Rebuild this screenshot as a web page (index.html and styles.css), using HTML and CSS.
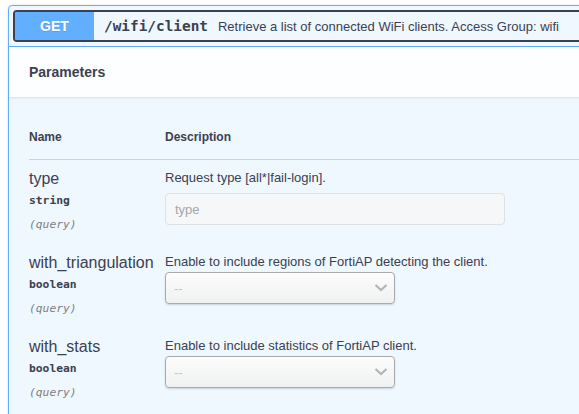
FILE: index.html
```html
<!DOCTYPE html>
<html lang="en">
<head>
<meta charset="utf-8">
<title>GET /wifi/client</title>
<link rel="stylesheet" href="styles.css">
</head>
<body>
<div class="opblock">
  <div class="summary">
    <div class="summary-inner">
      <span class="method">GET</span>
      <span class="path">/wifi/client</span>
      <span class="summary-desc">Retrieve a list of connected WiFi clients. Access Group: wifi</span>
    </div>
  </div>
  <div class="section-header"><h4 class="section-title">Parameters</h4></div>
  <div class="table-container">
    <div class="thead">
      <div class="col-name">Name</div>
      <div class="col-desc">Description</div>
    </div>

    <div class="param-row">
      <div class="col-name">
        <div class="param-name">type</div>
        <div class="param-type">string</div>
        <div class="param-in">(query)</div>
      </div>
      <div class="col-desc">
        <p class="param-text">Request type [all*|fail-login].</p>
        <input class="text-input" type="text" placeholder="type" disabled>
      </div>
    </div>

    <div class="param-row">
      <div class="col-name">
        <div class="param-name">with_triangulation</div>
        <div class="param-type">boolean</div>
        <div class="param-in">(query)</div>
      </div>
      <div class="col-desc">
        <p class="param-text">Enable to include regions of FortiAP detecting the client.</p>
        <div class="select">
          <span class="select-value">--</span>
          <svg class="chevron" width="14" height="8" viewBox="0 0 14 8"><path d="M1.5 1 L7 6 L12.5 1" fill="none" stroke="#b4b4b4" stroke-width="2.2"/></svg>
        </div>
      </div>
    </div>

    <div class="param-row">
      <div class="col-name">
        <div class="param-name">with_stats</div>
        <div class="param-type">boolean</div>
        <div class="param-in">(query)</div>
      </div>
      <div class="col-desc">
        <p class="param-text">Enable to include statistics of FortiAP client.</p>
        <div class="select">
          <span class="select-value">--</span>
          <svg class="chevron" width="14" height="8" viewBox="0 0 14 8"><path d="M1.5 1 L7 6 L12.5 1" fill="none" stroke="#b4b4b4" stroke-width="2.2"/></svg>
        </div>
      </div>
    </div>
  </div>
</div>
</body>
</html>
```
FILE: styles.css
```css
html, body {
  margin: 0;
  padding: 0;
  overflow: hidden;
  background: #ffffff;
}

body {
  font-family: "Liberation Sans", Arial, sans-serif;
  color: #3b4151;
  padding: 5px 0 0 8px;
}

.opblock {
  width: 640px;
  border: 1px solid #61affe;
  border-radius: 4px;
  background: #eff7ff;
  box-shadow: 0 0 3px rgba(0, 0, 0, 0.12);
}

.summary {
  padding: 4px;
  border-bottom: 1px solid #61affe;
}

.summary-inner {
  display: flex;
  align-items: center;
  height: 32px;
  box-sizing: border-box;
  border: 2px solid #3b4151;
  border-radius: 4px;
}

.method {
  width: 79px;
  height: 28px;
  line-height: 28px;
  text-align: center;
  background: #61affe;
  color: #ffffff;
  font-weight: 700;
  font-size: 14px;
  border-radius: 2px 0 0 2px;
  text-shadow: 0 1px 0 rgba(0, 0, 0, 0.1);
}

.path {
  padding: 0 10px;
  font-family: "DejaVu Sans Mono", "Liberation Mono", monospace;
  font-weight: 700;
  font-size: 14.4px;
  color: #3b4151;
}

.summary-desc {
  font-size: 13px;
  color: #3b4151;
}

.section-header {
  display: flex;
  align-items: center;
  height: 50px;
  padding: 0 20px;
  background: rgba(255, 255, 255, 0.8);
  box-shadow: 0 1px 2px rgba(0, 0, 0, 0.1);
}

.section-title {
  margin: 0;
  font-size: 14px;
  font-weight: 700;
}

.table-container {
  padding: 20px;
}

.thead {
  display: flex;
  padding: 13px 0 14px;
  line-height: 15px;
  font-size: 12px;
  font-weight: 700;
  border-bottom: 1px solid rgba(59, 65, 81, 0.2);
}

.col-name {
  width: 136px;
  flex: none;
}

.col-desc {
  flex: 1;
}

.param-row {
  display: flex;
  padding: 10px 0 12px;
}

.param-name {
  font-size: 16px;
  line-height: 18px;
  white-space: nowrap;
}

.param-type {
  margin-top: 6px;
  font-family: "DejaVu Sans Mono", "Liberation Mono", monospace;
  font-size: 11.3px;
  line-height: 14px;
  font-weight: 700;
}

.param-in {
  margin-top: 10px;
  font-family: "DejaVu Sans Mono", "Liberation Mono", monospace;
  font-size: 11.3px;
  line-height: 14px;
  font-style: italic;
  color: #808080;
}

.param-text {
  margin: 0;
  font-size: 13px;
  line-height: 16px;
}

.text-input {
  display: block;
  box-sizing: border-box;
  margin-top: 7px;
  width: 340px;
  height: 32px;
  padding: 0 9px;
  font-family: "Liberation Sans", Arial, sans-serif;
  font-size: 13px;
  background: #f6f7f8;
  border: 1px solid #dfe1e4;
  border-radius: 4px;
  color: #a0a0a0;
}

.text-input::placeholder {
  color: #a4a6aa;
}

.select {
  display: flex;
  align-items: center;
  justify-content: space-between;
  box-sizing: border-box;
  margin-top: 2px;
  width: 230px;
  height: 32px;
  padding: 0 6px 0 8px;
  background: linear-gradient(#fcfcfc, #f0f1f2);
  border: 1px solid #aaaaaa;
  border-radius: 4px;
  box-shadow: 0 1px 2px rgba(0, 0, 0, 0.15);
}

.select-value {
  font-size: 13px;
  color: #c4c4c4;
}

.chevron {
  display: block;
}
```
